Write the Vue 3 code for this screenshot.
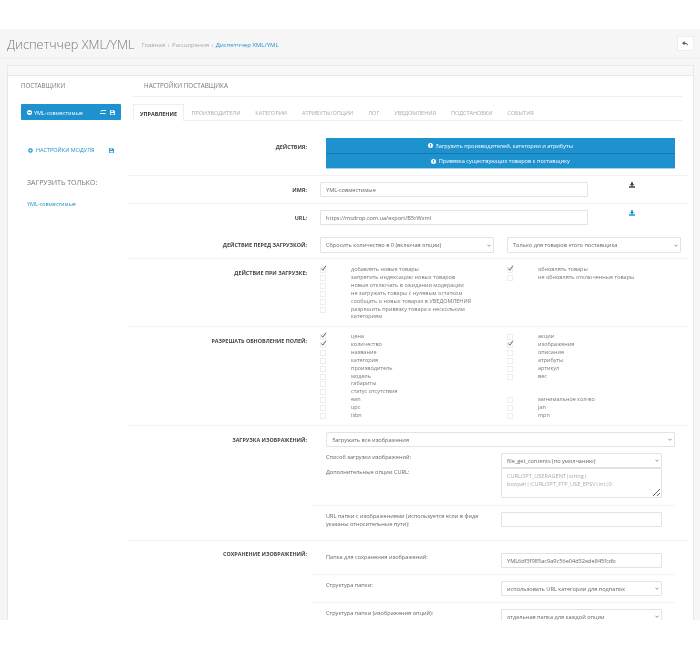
<script setup>
const tabs = ['Управление', 'Производители', 'Категории', 'Атрибуты/опции', 'Лог', 'Уведомления', 'Подстановки', 'События']

const importLeft = [
  { text: 'добавлять новые товары', on: true },
  { text: 'запретить индексацию новых товаров' },
  { text: 'новые отключать в ожидании модерации' },
  { text: 'не загружать товары с нулевым остатком' },
  { text: 'сообщать о новых товарах в УВЕДОМЛЕНИЯ' },
  { text: 'разрешить привязку товара к нескольким категориям' }
]
const importRight = [
  { text: 'обновлять товары', on: true },
  { text: 'не обновлять отключенные товары' }
]
const fieldsLeft = [
  { text: 'цена', on: true },
  { text: 'количество', on: true },
  { text: 'название' },
  { text: 'категория' },
  { text: 'производитель' },
  { text: 'модель' },
  { text: 'габариты' },
  { text: 'статус отсутствия' },
  { text: 'ean' },
  { text: 'upc' },
  { text: 'isbn' }
]
const fieldsRight = [
  { text: 'акции' },
  { text: 'изображения', on: true },
  { text: 'описание' },
  { text: 'атрибуты' },
  { text: 'артикул' },
  { text: 'вес' },
  null,
  null,
  { text: 'минимальное кол-во' },
  { text: 'jan' },
  { text: 'mpn' }
]
</script>

<template>
  <div class="page">
    <header class="page-header">
      <h1>Диспетччер XML/YML</h1>
      <ul class="crumbs">
        <li>Главная</li>
        <li class="sep">›</li>
        <li>Расширения</li>
        <li class="sep">›</li>
        <li class="current">Диспетччер XML/YML</li>
      </ul>
      <button class="back">
        <svg viewBox="0 0 16 14" width="7" height="6"><path d="M6 0 0 5l6 5V7c4 0 6 1 8 5 0-5-3-8-8-8z" fill="#555" /></svg>
      </button>
    </header>

    <section class="panel">
      <div class="panel-heading"></div>
      <div class="panel-body">
        <aside class="side">
          <div class="side-title">Поставщики</div>
          <div class="supplier">
            <svg viewBox="0 0 12 12" width="5" height="5"><circle cx="6" cy="6" r="6" fill="#fff" /><rect x="2.5" y="5" width="7" height="2" fill="#1e91cf" /></svg>
            <span class="supplier-name">YML-совместимые</span>
            <svg viewBox="0 0 12 10" width="6" height="5"><path d="M3 0h9v2H3zM0 3l3-2v2zM0 6h9v2H0zM12 7 9 9V6z" fill="#fff" /></svg>
            <svg class="supplier-save" viewBox="0 0 12 12" width="5" height="5"><path d="M0 0h9l3 3v9H0zM2 1v3h6V1zM2 7v4h8V7z" fill="#fff" /></svg>
          </div>
          <div class="module-link">
            <svg viewBox="0 0 12 12" width="5" height="5"><circle cx="6" cy="6" r="4" fill="none" stroke="#1e91cf" stroke-width="3" /></svg>
            <span>Настройки модуля</span>
            <svg class="module-save" viewBox="0 0 12 12" width="5" height="5"><path d="M0 0h9l3 3v9H0zM2 1v3h6V1zM2 7v4h8V7z" fill="#1e91cf" /></svg>
          </div>
          <div class="only-title">ЗАГРУЗИТЬ ТОЛЬКО:</div>
          <a class="only-link">YML-совместимые</a>
        </aside>

        <div class="main">
          <div class="main-title">Настройки поставщика</div>
          <ul class="tabs">
            <li v-for="(tab, i) in tabs" :key="tab" :class="{ active: i === 0 }">{{ tab }}</li>
          </ul>

          <div class="form">
            <div class="row row-actions">
              <label>Действия:</label>
              <div class="actions">
                <button>
                  <svg viewBox="0 0 12 12" width="5" height="5"><circle cx="6" cy="6" r="6" fill="#fff" /><rect x="5" y="2.5" width="2" height="4.5" fill="#1e91cf" /><rect x="5" y="8" width="2" height="2" fill="#1e91cf" /></svg>
                  Загрузить производителей, категории и атрибуты
                </button>
                <button>
                  <svg viewBox="0 0 12 12" width="5" height="5"><circle cx="6" cy="6" r="6" fill="#fff" /><rect x="5" y="2.5" width="2" height="4.5" fill="#1e91cf" /><rect x="5" y="8" width="2" height="2" fill="#1e91cf" /></svg>
                  Привязка существующих товаров к поставщику
                </button>
              </div>
            </div>

            <div class="row row-name">
              <label>Имя:</label>
              <div class="field-with-icon">
                <input class="control wide" type="text" value="YML-совместимые" />
                <svg viewBox="0 0 12 11" width="6" height="6"><path d="M4 0h4v4h3L6 8 1 4h3zM0 8h12v3H0z" fill="#444" /></svg>
              </div>
            </div>

            <div class="row row-url">
              <label>URL:</label>
              <div class="field-with-icon">
                <input class="control wide" type="text" value="https://msdrop.com.ua/export/B5rWxml" />
                <svg viewBox="0 0 12 11" width="6" height="6"><path d="M4 0h4v4h3L6 8 1 4h3zM0 8h12v3H0z" fill="#1e91cf" /></svg>
              </div>
            </div>

            <div class="row row-before">
              <label>Действие перед загрузкой:</label>
              <div class="two-selects">
                <select class="control"><option>Сбросить количество в 0 (включая опции)</option></select>
                <select class="control"><option>Только для товаров этого поставщика</option></select>
              </div>
            </div>

            <div class="row row-checks row-on-import">
              <label>Действие при загрузке:</label>
              <div class="check-cols">
                <div class="check-col">
                  <div v-for="item in importLeft" :key="item.text" class="check">
                    <span class="box"><svg v-if="item.on" viewBox="0 0 10 10" width="7" height="7"><path d="M2 5l2 2.5L8.5 1" fill="none" stroke="#555" stroke-width="1.3" /></svg></span>
                    <span class="check-text">{{ item.text }}</span>
                  </div>
                </div>
                <div class="check-col">
                  <div v-for="item in importRight" :key="item.text" class="check">
                    <span class="box"><svg v-if="item.on" viewBox="0 0 10 10" width="7" height="7"><path d="M2 5l2 2.5L8.5 1" fill="none" stroke="#555" stroke-width="1.3" /></svg></span>
                    <span class="check-text">{{ item.text }}</span>
                  </div>
                </div>
              </div>
            </div>

            <div class="row row-checks row-fields">
              <label>Разрешать обновление полей:</label>
              <div class="check-cols">
                <div class="check-col">
                  <div v-for="item in fieldsLeft" :key="item.text" class="check">
                    <span class="box"><svg v-if="item.on" viewBox="0 0 10 10" width="7" height="7"><path d="M2 5l2 2.5L8.5 1" fill="none" stroke="#555" stroke-width="1.3" /></svg></span>
                    <span class="check-text">{{ item.text }}</span>
                  </div>
                </div>
                <div class="check-col">
                  <div v-for="(item, i) in fieldsRight" :key="i" class="check">
                    <template v-if="item">
                      <span class="box"><svg v-if="item.on" viewBox="0 0 10 10" width="7" height="7"><path d="M2 5l2 2.5L8.5 1" fill="none" stroke="#555" stroke-width="1.3" /></svg></span>
                      <span class="check-text">{{ item.text }}</span>
                    </template>
                  </div>
                </div>
              </div>
            </div>

            <div class="row row-images">
              <label>Загрузка изображений:</label>
              <div class="image-opts">
                <select class="control full"><option>Загружать все изображения</option></select>
                <div class="sub-row sub-method">
                  <div class="sub-labels">
                    <div>Способ загрузки изображений:</div>
                    <div class="curl-label">Дополнительные опции CURL:</div>
                  </div>
                  <div class="sub-control">
                    <select class="control"><option>file_get_contents (по умолчанию)</option></select>
                    <textarea class="control" readonly>CURLOPT_USERAGENT|string|
booyah|:CURLOPT_FTP_USE_EPSV|int|0</textarea>
                  </div>
                </div>
                <div class="sub-row sub-url">
                  <div class="sub-labels">URL папки с изображениями (используется если в фиде указаны относительные пути):</div>
                  <div class="sub-control"><input class="control" type="text" /></div>
                </div>
              </div>
            </div>

            <div class="row row-save">
              <label>Сохранение изображений:</label>
              <div class="image-opts">
                <div class="sub-row sub-save">
                  <div class="sub-labels">Папка для сохранения изображений:</div>
                  <div class="sub-control"><input class="control" type="text" value="YML6df3f985ac9a9c56e04d32ede845fcdb" /></div>
                </div>
                <div class="sub-row sub-save">
                  <div class="sub-labels">Структура папки:</div>
                  <div class="sub-control"><select class="control"><option>использовать URL категории для подпапок</option></select></div>
                </div>
                <div class="sub-row sub-save last">
                  <div class="sub-labels">Структура папки (изображения опций):</div>
                  <div class="sub-control"><select class="control"><option>отдельная папка для каждой опции</option></select></div>
                </div>
              </div>
            </div>
          </div>
        </div>
      </div>
    </section>
  </div>
</template>

<style>
html, body { background: #fff; }
</style>

<style scoped>
.page {
  box-sizing: border-box;
  height: 591px;
  margin-top: 29px;
  background: #f6f6f6;
  overflow: hidden;
  font-family: "Open Sans", sans-serif;
  font-size: 6.5px;
  color: #777;
  filter: blur(0.35px);
}

.page-header {
  display: flex;
  align-items: center;
  height: 29px;
  padding: 0 6px 0 7px;
  border-bottom: 1px solid #eee;
}
.page-header h1 {
  margin: 0;
  font-size: 12.7px;
  font-weight: 300;
  color: #777;
}
.crumbs {
  display: flex;
  gap: 2.5px;
  margin: 2px 0 0 7px;
  padding: 0;
  list-style: none;
  color: #aaa;
  font-size: 6px;
  flex: 1;
}
.crumbs .current { color: #1e91cf; }
.back {
  display: flex;
  align-items: center;
  justify-content: center;
  width: 17px;
  height: 15px;
  padding: 0;
  background: #fff;
  border: 1px solid #eee;
}

.panel {
  margin: 6px 6px 0 7px;
  background: #fff;
  border: 1px solid #e8e8e8;
  border-bottom: 0;
}
.panel-heading {
  height: 9px;
  background: #f8f8f8;
  border-bottom: 1px solid #e8e8e8;
}
.panel-body { display: flex; }

.side {
  width: 119px;
  flex: none;
  padding-left: 13px;
  box-sizing: border-box;
}
.side-title {
  padding-top: 5px;
  height: 23px;
  box-sizing: border-box;
  font-size: 6.2px;
  text-transform: uppercase;
  line-height: 9px;
}
.supplier {
  display: flex;
  align-items: center;
  gap: 2px;
  width: 100px;
  height: 16px;
  margin-top: 5px;
  padding: 1px 6px 0 6px;
  box-sizing: border-box;
  background: #1e91cf;
  border-radius: 1px;
  color: #fff;
  font-size: 5.5px;
}
.supplier-name { flex: 1; }
.supplier-save { margin-left: 2px; }
.module-link {
  display: flex;
  align-items: center;
  gap: 3px;
  width: 86px;
  margin: 26px 0 0 7px;
  color: #1e91cf;
  font-size: 5.5px;
  text-transform: uppercase;
}
.module-save { margin-left: auto; }
.only-title {
  margin: 24px 0 0 6px;
  font-size: 7px;
  line-height: 10px;
}
.only-link {
  display: block;
  margin: 12px 0 0 6px;
  color: #1e91cf;
  font-size: 5.5px;
}

.main {
  flex: 1;
  min-width: 0;
}
.main-title {
  height: 21px;
  margin: 0 11px 0 6px;
  padding: 5px 0 0 11px;
  box-sizing: border-box;
  border-bottom: 1px solid #eee;
  font-size: 6.3px;
  line-height: 9px;
  text-transform: uppercase;
}
.tabs {
  display: flex;
  height: 16px;
  margin: 7px 11px 0 6px;
  padding: 0;
  list-style: none;
  border-bottom: 1px solid #eee;
  font-size: 5.5px;
  line-height: 18px;
  color: #aaa;
  text-transform: uppercase;
}
.tabs li { height: 16px; padding: 0 7.5px; }
.tabs li.active {
  margin-bottom: -1px;
  padding: 0 6px;
  background: #fff;
  border: 1px solid #eee;
  border-bottom: 0;
  color: #333;
  font-size: 5.4px;
  font-weight: 700;
}

.form { margin-right: 5px; }
.row {
  display: flex;
  border-bottom: 1px solid #f3f3f3;
  box-sizing: border-box;
}
.row > label {
  width: 180px;
  flex: none;
  text-align: right;
  font-size: 5.4px;
  line-height: 8px;
  font-weight: 700;
  color: #444;
  text-transform: uppercase;
}
.row-actions { height: 55px; padding-top: 17px; }
.row-name { height: 28px; padding-top: 6px; }
.row-url { height: 27px; padding-top: 6px; border-bottom: 0; }
.row-before { height: 28px; padding-top: 6px; }
.row-on-import { height: 68px; padding-top: 7px; }
.row-fields { height: 99px; padding-top: 6px; }
.row-images { height: 115px; padding-top: 6px; }
.row-save { padding-top: 6px; border-bottom: 0; }
.row-name > label, .row-url > label, .row-before > label { padding-top: 4px; }
.row-actions > label { padding-top: 5px; }
.row-checks > label { padding-top: 3px; }
.row-fields > label { padding-top: 4px; }
.row-images > label { padding-top: 4px; }
.row-save > label { padding-top: 3px; }

.actions {
  display: flex;
  flex-direction: column;
  width: 349px;
  margin-left: 19px;
}
.actions button {
  height: 15.5px;
  padding: 1px 0 0;
  background: #1e91cf;
  border: 0;
  border-bottom: 1px solid #1978ab;
  color: #fff;
  font-family: inherit;
  font-size: 5.6px;
}
.actions button:last-child { border-bottom: 1px solid #a5d3ec; }
.actions svg { vertical-align: -0.5px; margin-right: 1px; }

.control {
  display: block;
  box-sizing: border-box;
  height: 15px;
  padding: 0 5px;
  background: #fff;
  border: 1px solid #e3e3e3;
  border-radius: 1px;
  color: #666;
  font-family: inherit;
  font-size: 5.6px;
  outline: none;
}
select.control {
  appearance: none;
  background: #fff url("data:image/svg+xml,%3Csvg xmlns='http://www.w3.org/2000/svg' viewBox='0 0 10 6'%3E%3Cpath d='M1 1l4 4 4-4' fill='none' stroke='%23555' stroke-width='1.6'/%3E%3C/svg%3E") no-repeat right 2px center / 4px 3px;
}
.field-with-icon {
  display: flex;
  margin-left: 13px;
}
.field-with-icon svg {
  margin-left: 41px;
}
.wide { width: 268px; }
.two-selects {
  display: flex;
  gap: 13px;
  margin-left: 13px;
}
.two-selects .control { width: 174px; height: 16px; }

.check-cols {
  display: flex;
  margin-left: 13px;
}
.check-col { width: 187px; }
.check {
  display: flex;
  min-height: 7.9px;
  font-size: 5.5px;
  line-height: 7.9px;
}
.box {
  position: relative;
  flex: none;
  box-sizing: border-box;
  width: 6px;
  height: 6px;
  margin: 1px 25px 0 0;
  border: 1px solid #eee;
}
.box svg {
  position: absolute;
  left: -1px;
  top: -3px;
}
.check-text { width: 140px; }

.image-opts {
  margin-left: 19px;
  width: 362px;
}
.image-opts .full { width: 349px; }
.sub-row {
  display: flex;
  margin-right: 13px;
  margin-left: -13px;
  padding-left: 13px;
  font-size: 5.6px;
  line-height: 8px;
  color: #666;
}
.sub-labels { width: 175px; flex: none; padding-right: 20px; box-sizing: border-box; }
.sub-control .control { width: 161px; }
.sub-method {
  height: 59px;
  padding-top: 6px;
  border-bottom: 1px solid #f3f3f3;
  box-sizing: border-box;
}
.curl-label { margin-top: 7px; }
.sub-method textarea {
  height: 30px;
  padding: 3px 5px;
  margin-top: 0;
  color: #aaa;
  line-height: 8px;
}
.sub-url { padding-top: 6px; }
.sub-save {
  height: 28px;
  padding-top: 6px;
  box-sizing: border-box;
  border-bottom: 1px solid #f3f3f3;
}
.sub-save.last { border-bottom: 0; }
</style>
